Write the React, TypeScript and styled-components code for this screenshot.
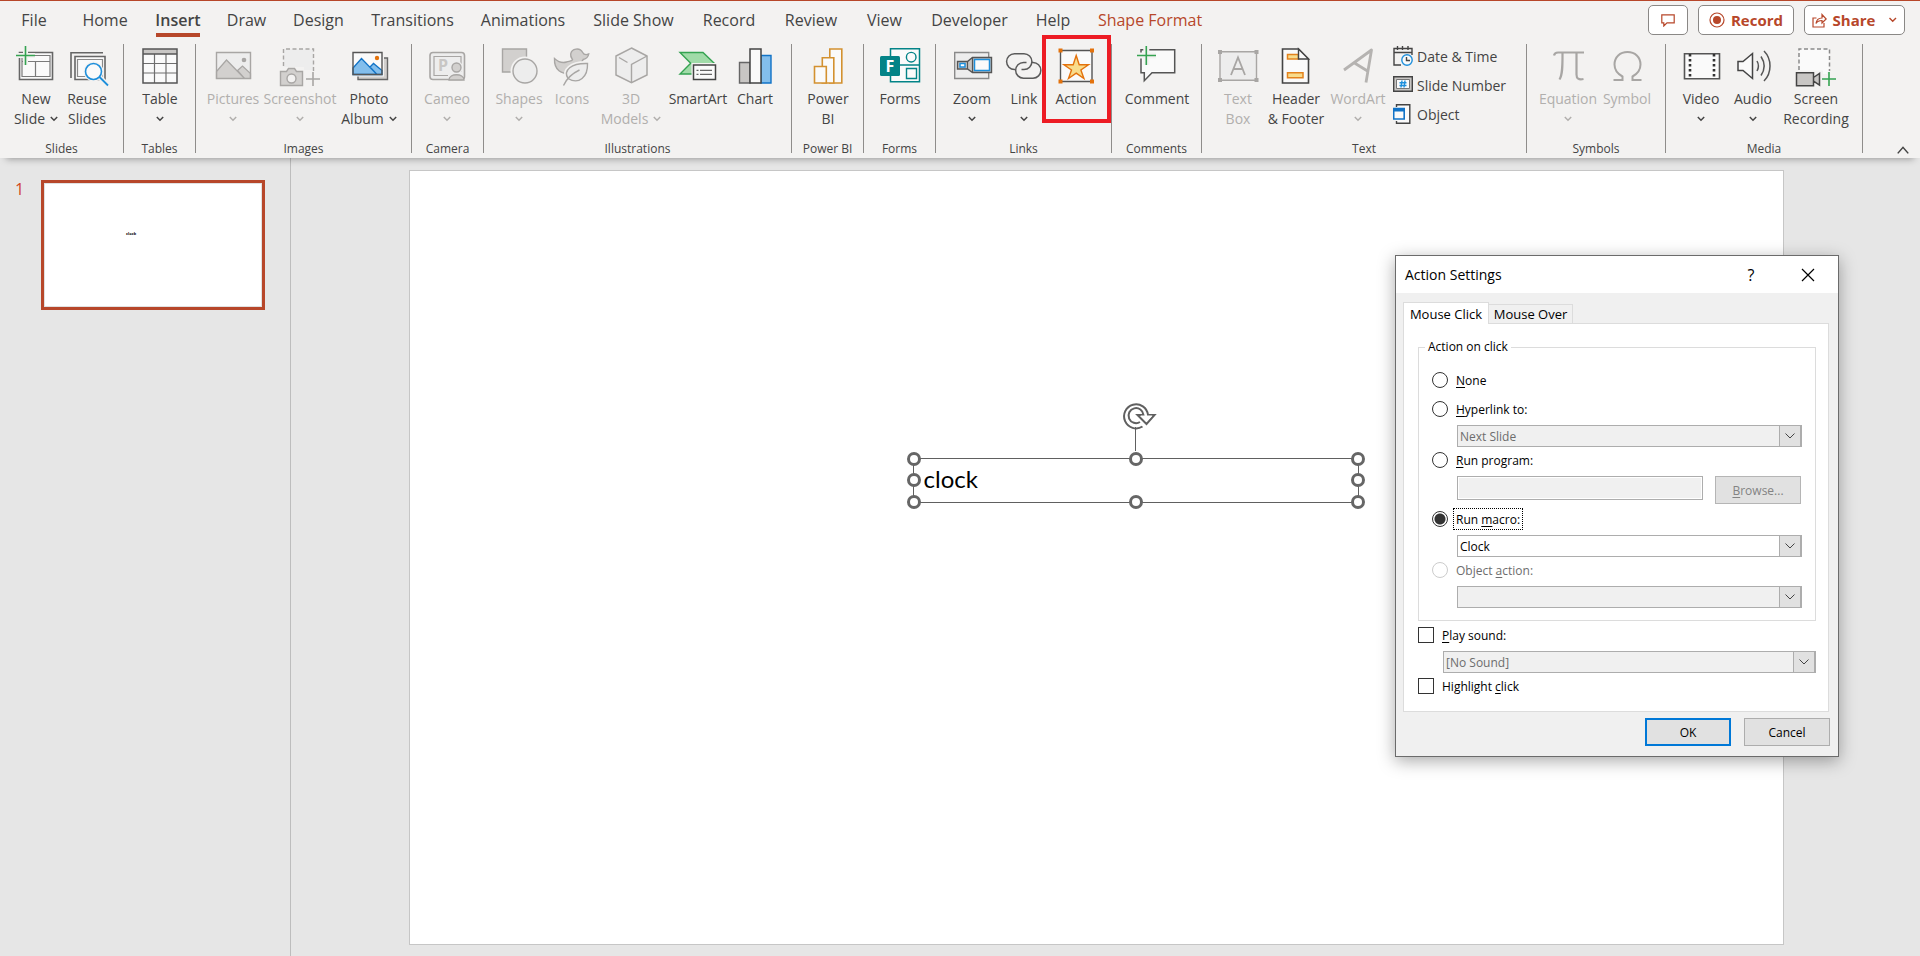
import React from "react";
import styled, { createGlobalStyle, css } from "styled-components";

const accent = "#b7472a";
const ink = "#444444";
const faded = "#b1afad";

const GlobalStyle = createGlobalStyle`
  * { box-sizing: border-box; }
  body {
    margin: 0;
    background: #e6e6e6;
    color: ${ink};
    font-family: "Open Sans", "Noto Sans", sans-serif;
    font-size: 14px;
  }
  button, input, select { font: inherit; color: inherit; }
`;

const Page = styled.div`
  min-height: 100vh;
  display: flex;
  flex-direction: column;
  position: relative;
`;

/* ---------- Tab strip ---------- */

const TopBar = styled.header`
  display: flex;
  align-items: flex-start;
  justify-content: space-between;
  height: 40px;
  padding: 4px 15px 0 21px;
  border-top: 1px solid ${accent};
  background: #f3f2f1;
`;

const TabList = styled.nav`
  display: flex;
  gap: 28px;
`;

const RibbonTab = styled.a<{ $w: number; $active?: boolean; $accent?: boolean }>`
  display: flex;
  flex: none;
  justify-content: center;
  width: ${(p) => p.$w}px;
  height: 32px;
  line-height: 30px;
  font-size: 16px;
  white-space: nowrap;
  text-decoration: none;
  color: ${(p) => (p.$accent ? accent : ink)};
  ${(p) =>
    p.$active &&
    css`
      font-weight: 600;
      border-bottom: 4px solid ${accent};
    `}
  &:first-child { margin-right: 7px; }
`;

const TopActions = styled.div`
  display: flex;
  gap: 10px;
`;

const PillButton = styled.button<{ $w: number }>`
  display: flex;
  align-items: center;
  justify-content: center;
  gap: 6px;
  width: ${(p) => p.$w}px;
  height: 30px;
  padding: 0;
  border: 1px solid #8a8886;
  border-radius: 5px;
  background: #ffffff;
  color: ${accent};
  font-size: 15px;
  font-weight: 700;
`;

/* ---------- Ribbon ---------- */

const Ribbon = styled.section`
  position: relative;
  z-index: 1;
  display: flex;
  height: 118px;
  padding-top: 4px;
  background: #f3f2f1;
  box-shadow: 0 7px 7px -6px rgba(0, 0, 0, 0.35);
`;

const GroupBox = styled.div<{ $w: number }>`
  display: flex;
  flex-direction: column;
  flex: none;
  width: ${(p) => p.$w}px;
  height: 109px;
  border-right: 1px solid #8f8d8b;
`;

const GroupTools = styled.div<{ $start: number }>`
  display: flex;
  flex: none;
  height: 95px;
  padding-left: ${(p) => p.$start}px;
`;

const GroupLabel = styled.div`
  flex: none;
  line-height: 20px;
  font-size: 12px;
  text-align: center;
  white-space: nowrap;
`;

const BigButton = styled.button<{ $w: number }>`
  position: relative;
  display: flex;
  flex-direction: column;
  align-items: center;
  flex: none;
  width: ${(p) => p.$w}px;
  height: 86px;
  padding: 0;
  border: 0;
  background: none;
  line-height: 20px;
  white-space: nowrap;
  &:disabled { color: ${faded}; }
`;

const IconSvg = styled.svg`
  display: block;
  flex: none;
  width: 40px;
  height: 40px;
  margin-bottom: 5px;
  overflow: visible;
`;

const LabelLine = styled.span`
  display: flex;
  align-items: center;
  gap: 5px;
  height: 20px;
`;

const SmallButtons = styled.div`
  display: flex;
  flex-direction: column;
  gap: 5px;
  padding-left: 3px;
`;

const SmallButton = styled.button`
  display: flex;
  align-items: center;
  gap: 4px;
  height: 24px;
  padding: 0;
  border: 0;
  background: none;
  white-space: nowrap;
`;

const Highlight = styled.span`
  position: absolute;
  inset: -9px -9px 7px -8px;
  border: 4px solid #ed1c24;
`;

const CollapseButton = styled.button`
  display: flex;
  align-items: flex-end;
  margin-left: auto;
  padding: 0 11px 4px 0;
  border: 0;
  background: none;
`;

const Chevron = ({ big }: { big?: boolean }) => (
  <svg width={big ? 12 : 8} height={big ? 8 : 6} viewBox="0 0 8 6" preserveAspectRatio="none" fill="none" stroke="currentColor" strokeWidth={big ? 1 : 1.5} aria-hidden>
    {big ? <path d="M0.5 5.5 4 1 7.5 5.5" /> : <path d="M0.8 1 4 4.2 7.2 1" />}
  </svg>
);

/* ---------- Icons, drawn on a 40 by 40 grid ---------- */

const g = "#666666";
const lg = "#a8a6a4";

const icons: Record<string, React.ReactNode> = {
  newSlide: (
    <>
      <path d="M3.5 8.5h33v27h-33z" fill="#fafafa" stroke={g} strokeWidth="1.6" />
      <path d="M6 11.5h28v21H6zM6 17.5h28M19.5 17.5v15" fill="none" stroke="#7a7a7a" strokeWidth="1.2" />
      <path d="M9.5 2v19M0 11.5h19" stroke="#f3f2f1" strokeWidth="5" />
      <path d="M9.5 2v19M0 11.5h19" stroke="#35a352" strokeWidth="1.6" />
    </>
  ),
  reuse: (
    <>
      <path d="M4 34V8.7h32" fill="none" stroke={g} strokeWidth="1.6" />
      <path d="M8 12.5h30v23H8z" fill="#fafafa" stroke={g} strokeWidth="1.6" />
      <path d="M10.5 15.5h25v17h-25z" fill="none" stroke="#8a8a8a" strokeWidth="1.2" />
      <path d="M32.5 33l8.5 8.5" stroke="#f3f2f1" strokeWidth="5" />
      <circle cx="26.5" cy="27.5" r="8" fill="#fafafa" stroke="#f3f2f1" strokeWidth="4" />
      <circle cx="26.5" cy="27.5" r="8" fill="#fafafa" stroke="#1e8fdb" strokeWidth="1.6" />
      <path d="M32.5 33l8.5 8.5" stroke="#1e8fdb" strokeWidth="1.8" />
    </>
  ),
  table: (
    <>
      <path d="M3 5h34v34H3z" fill="#fafafa" />
      <path d="M3 5h34v5H3z" fill="#c8c6c4" />
      <path d="M14.5 10v29M26 10v29M3 19.5h34M3 29h34" stroke="#6e6e6e" strokeWidth="1.2" />
      <path d="M3 5h34v34H3zM3 10h34" fill="none" stroke="#555" strokeWidth="1.5" />
    </>
  ),
  pictures: (
    <>
      <path d="M3.5 8.5h34v26h-34z" fill="#ededed" />
      <path d="M3.5 27.5l10-11.5 18 18.5h-28zM24.5 26.5l5-4.5 8 7.5v5h-6z" fill="#d2d0ce" stroke={lg} strokeWidth="1.2" />
      <circle cx="31" cy="16" r="2.3" fill={lg} />
      <path d="M3.5 8.5h34v26h-34z" fill="none" stroke={lg} strokeWidth="1.4" />
    </>
  ),
  screenshot: (
    <>
      <path d="M3.5 5h30v21h-30z" fill="#ededed" />
      <path d="M3.5 22V5h30v22" fill="none" stroke={lg} strokeWidth="1.4" strokeDasharray="4 2.5" />
      <path d="M-1 23h25v20H-1z" fill="#f3f2f1" />
      <path d="M.5 27.5h6l2-3h6l2 3h6v14H.5z" fill="#d2d0ce" stroke={lg} strokeWidth="1.4" />
      <circle cx="11.5" cy="34.5" r="4.5" fill="#f3f2f1" stroke={lg} strokeWidth="1.4" />
      <path d="M33 28v14M26 35h14" stroke={lg} strokeWidth="1.6" />
    </>
  ),
  album: (
    <>
      <path d="M9 14h29.5v21.5H9z" fill="#d2d0ce" stroke={g} strokeWidth="1.4" />
      <path d="M2 6.5h33v26H2z" fill="#f3f2f1" />
      <path d="M4 8.5h29v22H4z" fill="#fafafa" />
      <path d="M4 24l8.5-9.5L28 30.5H4zM21 23l3.5-3.5 8.5 7v4h-5z" fill="#83beec" stroke="#1173c7" strokeWidth="1.3" />
      <circle cx="28" cy="14" r="2.2" fill="#e3720d" />
      <path d="M4 8.5h29v22H4z" fill="none" stroke="#555" strokeWidth="1.4" />
    </>
  ),
  cameo: (
    <>
      <rect x="3" y="8.5" width="34.5" height="27" rx="3" fill="#ededed" stroke={lg} strokeWidth="1.6" />
      <path d="M21 31.5H7v-19h27v15" fill="none" stroke={lg} strokeWidth="1.2" />
      <text x="11" y="27" fontSize="16" fontWeight="700" fill="#c8c6c4">P</text>
      <circle cx="29.5" cy="23.5" r="6.5" fill="#ededed" />
      <path d="M22 36c0-7 15-7 15 0z" fill="#d2d0ce" stroke={lg} strokeWidth="1.4" />
      <circle cx="29.5" cy="23.5" r="4.5" fill="#d2d0ce" stroke={lg} strokeWidth="1.4" />
    </>
  ),
  shapes: (
    <>
      <path d="M3.5 5h24v23h-24z" fill="#d2d0ce" stroke={lg} strokeWidth="1.4" />
      <circle cx="26" cy="27" r="14.5" fill="#f3f2f1" />
      <circle cx="26" cy="27" r="12" fill="#ededed" stroke={lg} strokeWidth="1.4" />
    </>
  ),
  icons: (
    <>
      <path d="M2.5 14.5c5 4.5 9 4.5 12 3.5 3.5-1 6-1 6-2.5-1-1.5-2.2-3-1.8-5.5 1-5.5 9-7 12-1.5 1 2 3.5 2.5 6 1.5-.5 3-2.5 5-5.5 5.5-1 2-2.5 3-1.7 5 1 6-3.5 9.5-9 9.5C9 30.5 2 26 2.5 14.5z" fill="#d2d0ce" stroke={lg} strokeWidth="1.4" />
      <path d="M16 34.5c-5-8 3-15.5 19.5-15C36 33 27 41 16 34.5z" fill="#ededed" stroke="#f3f2f1" strokeWidth="5" />
      <path d="M16 34.5c-5-8 3-15.5 19.5-15C36 33 27 41 16 34.5z" fill="#ededed" stroke={lg} strokeWidth="1.4" />
      <path d="M11.5 41.5C14 36 19 30 27.5 26" fill="none" stroke={lg} strokeWidth="1.4" />
    </>
  ),
  models: (
    <>
      <path d="M20.5 4 36 12v19l-15.5 7.7L5 31V12z" fill="#ededed" stroke={lg} strokeWidth="1.5" />
      <path d="M20.5 38.5v-18L36 12M8 13.5l8.5 5" fill="none" stroke={lg} strokeWidth="1.4" />
    </>
  ),
  smartArt: (
    <>
      <path d="M2 8.5h23L36.5 19.5 26 30H2l10.7-10.7z" fill="#a0dba8" stroke="#35a352" strokeWidth="1.4" />
      <path d="M13.5 19h26v19h-26z" fill="#f3f2f1" />
      <path d="M15.5 21h22v14.5h-22z" fill="#fafafa" stroke="#444" strokeWidth="1.5" />
      <path d="M18.5 26.3h2M22 26.3h12M18.5 30.3h2M22 30.3h12" stroke="#666" strokeWidth="1.2" />
    </>
  ),
  chart: (
    <>
      <path d="M4.5 18.5H15V39H4.5z" fill="#c8c6c4" stroke={g} strokeWidth="1.4" />
      <path d="M26 11.5h10V39H26z" fill="#83beec" stroke="#1173c7" strokeWidth="1.4" />
      <path d="M15 5h11v34H15z" fill="#fafafa" stroke="#444" strokeWidth="1.5" />
    </>
  ),
  powerBi: (
    <g fill="#fafafa" stroke="#d39130" strokeWidth="1.6">
      <path d="M21.8 5h12v34h-12z" />
      <path d="M14.3 13.7h11.5V39H14.3z" />
      <path d="M6.5 22.5h11.8V39H6.5z" />
    </g>
  ),
  forms: (
    <>
      <path d="M10.5 4.7h29v33h-29zM10.5 21h29" fill="#fafafa" stroke="#038387" strokeWidth="1.5" />
      <circle cx="31.2" cy="13.2" r="4.8" fill="none" stroke="#038387" strokeWidth="1.4" />
      <path d="M26.5 24.5h10V34.5h-10z" fill="none" stroke="#038387" strokeWidth="1.4" />
      <rect x="0" y="12" width="20" height="20" rx="1.5" fill="#038387" />
      <text x="5.5" y="27.5" fontSize="16" fontWeight="700" fill="#fff">F</text>
    </>
  ),
  zoom: (
    <>
      <path d="M2.7 8.5h34v26h-34z" fill="#ededed" stroke="#8a8a8a" strokeWidth="1.4" />
      <path d="M5.5 17.5h10l5-4h19v15h-19l-5-3.5h-10z" fill="#c8c6c4" stroke="#555" strokeWidth="1.4" />
      <path d="M8 19.5h5v3.5H8z" fill="#fff" stroke="#1e8fdb" strokeWidth="1.5" />
      <path d="M22.5 15.5h15v11h-15z" fill="#fafafa" stroke="#1e8fdb" strokeWidth="1.5" />
      <path d="M15.5 17.5V25M20.5 13.5v15" stroke="#555" strokeWidth="1.2" />
    </>
  ),
  link: (
    <g fill="none" stroke="#5a5a5a" strokeWidth="1.5">
      <path d="M11.5 25.5h-1a7.8 7.8 0 0 1 0-15.8h9.5a7.8 7.8 0 0 1 0 15.8h-2.5" />
      <path d="M22.5 18.5h-3a7.8 7.8 0 0 0 0 15.7h9.5a7.8 7.8 0 0 0 0-15.7h-1.5" />
    </g>
  ),
  action: (
    <>
      <path d="M4.5 6.5h31.5v31H4.5z" fill="#fafafa" stroke="#555" strokeWidth="1.4" />
      <path d="M20.2 11.5l3 9.2h9.3l-7.6 5.3 3 8.5-7.7-5.3-7.7 5.3 3-8.5-7.6-5.3h9.3z" fill="#f8dc8c" stroke="#e3720d" strokeWidth="1.4" />
      <path d="M2.5 4.5h4v4h-4zM34 4.5h4v4h-4zM2.5 35.5h4v4h-4zM34 35.5h4v4h-4z" fill="#e3720d" />
    </>
  ),
  comment: (
    <>
      <path d="M4 5.7h33.7v23H15L7.3 36.7v-8H4z" fill="#fafafa" stroke="#555" strokeWidth="1.5" />
      <path d="M9.3 2v19M0 11.5h19" stroke="#f3f2f1" strokeWidth="6" />
      <path d="M9.3 2v19M0 11.5h19" stroke="#35a352" strokeWidth="1.6" />
    </>
  ),
  textBox: (
    <>
      <path d="M2 7.7h36.5v28.6H2z" fill="#ededed" stroke={lg} strokeWidth="1.4" />
      <path d="M0 6h4v4H0zM36.5 6h4v4h-4zM0 34h4v4H0zM36.5 34h4v4h-4z" fill={lg} />
      <path d="M13 31l7-17.5L27 31M15.5 25h9.3" fill="none" stroke={lg} strokeWidth="1.8" />
    </>
  ),
  header: (
    <>
      <path d="M6.5 5h16L32.5 15v24h-26z" fill="#fafafa" stroke="#444" strokeWidth="1.6" />
      <path d="M11.5 10.5h11v4.5h-11zM11.5 28.7h15.5v5h-15.5z" fill="#f8dc8c" stroke="#e3821d" strokeWidth="1.5" />
      <path d="M22.5 5v10h10z" fill="#fafafa" stroke="#444" strokeWidth="1.4" />
    </>
  ),
  wordArt: <path d="M6 26 33.5 6 28 38.5M16.5 19 29.5 27" fill="none" stroke="#b5b3b1" strokeWidth="2.8" strokeLinejoin="round" />,
  equation: <path d="M6 11.5c.5-2.5 2-3 4-3h26M14.5 8.5c0 12 .3 22-3 27M28.5 8.5v22c0 4 2 5.5 7 4.5" fill="none" stroke={lg} strokeWidth="2.2" />,
  symbol: <path d="M6.5 36h9v-3.5C10 29.5 7.5 25.5 7.5 20.5 7.5 13 13 8 20.5 8s13 5 13 12.5c0 5-2.5 9-8 12V36h9" fill="none" stroke={lg} strokeWidth="2" />,
  video: (
    <>
      <path d="M3.5 9.7h35v25h-35z" fill="#fafafa" stroke="#555" strokeWidth="1.6" />
      <path d="M9 10v24.5M33 10v24.5" stroke="#333" strokeWidth="2.6" strokeDasharray="2.5 2.5" />
    </>
  ),
  audio: (
    <>
      <path d="M5 17.5h5l9.5-8v25l-9.5-8H5z" fill="#fafafa" stroke="#444" strokeWidth="1.5" />
      <path d="M24 17c2 3.5 2 6.5 0 10M28 12.5c4 6 4 13 0 19M31 7c8 8 8 22 0 30" fill="none" stroke="#555" strokeWidth="1.5" />
    </>
  ),
  screenRec: (
    <>
      <path d="M3 5h30.5v25H3z" fill="#fafafa" />
      <path d="M3 26V5h30.5v22" fill="none" stroke="#8a8a8a" strokeWidth="1.5" strokeDasharray="4 2.5" />
      <path d="M-1 26.5h28v17H-1z" fill="#f3f2f1" />
      <path d="M.5 28.7h17v13H.5zM17.5 33.5l6-4v11.5l-6-4z" fill="#c8c6c4" stroke="#444" strokeWidth="1.5" />
      <path d="M33 28v14M26 35h14" stroke="#f3f2f1" strokeWidth="4" />
      <path d="M33 28v14M26 35h14" stroke="#35a352" strokeWidth="1.6" />
    </>
  ),
};

type ToolProps = {
  icon: string;
  w: number;
  lines: string[];
  menu?: boolean;
  disabled?: boolean;
  children?: React.ReactNode;
};

const Tool = ({ icon, w, lines, menu, disabled, children }: ToolProps) => (
  <BigButton $w={w} disabled={disabled}>
    <IconSvg viewBox="0 0 40 40" aria-hidden>{icons[icon]}</IconSvg>
    <LabelLine>{lines[0]}</LabelLine>
    {(lines[1] || menu) && (
      <LabelLine>
        {lines[1]}
        {menu && <Chevron />}
      </LabelLine>
    )}
    {children}
  </BigButton>
);

const Group = ({ w, start, label, children }: { w: number; start: number; label: string; children: React.ReactNode }) => (
  <GroupBox $w={w}>
    <GroupTools $start={start}>{children}</GroupTools>
    <GroupLabel>{label}</GroupLabel>
  </GroupBox>
);

/* ---------- Work area ---------- */

const Workspace = styled.main`
  flex: 1;
  display: flex;
`;

const SlidePanel = styled.aside`
  display: flex;
  align-items: flex-start;
  gap: 20px;
  flex: none;
  width: 291px;
  padding: 22px 0 0 15px;
  border-right: 1px solid #bdbdbd;
`;

const SlideNumber = styled.span`
  width: 6px;
  font-size: 16px;
  line-height: 18px;
  color: #d24726;
`;

const Thumbnail = styled.button`
  width: 224px;
  height: 130px;
  padding: 0 0 22px 82px;
  border: 3px solid ${accent};
  background: #ffffff;
  box-shadow: inset 0 0 0 1px #e1e1e1;
  text-align: left;
  font-size: 4px;
  line-height: 6px;
  font-weight: 700;
  color: #000000;
`;

const Stage = styled.div`
  flex: 1;
  padding: 12px 136px 11px 118px;
`;

const Slide = styled.div`
  position: relative;
  aspect-ratio: 1375 / 775;
  border: 1px solid #c6c6c6;
  background: #ffffff;
`;

const TextShape = styled.div`
  position: absolute;
  left: 36.6%;
  top: 37.1%;
  width: 446px;
  height: 45px;
  padding-left: 10px;
  border: 1px solid #606060;
  font-family: Lato, sans-serif;
  font-size: 24px;
  line-height: 40px;
  color: #000000;
`;

const Handle = styled.span<{ $x: string; $y: string }>`
  position: absolute;
  left: ${(p) => p.$x};
  top: ${(p) => p.$y};
  width: 14px;
  height: 14px;
  margin: -7px 0 0 -7px;
  border: 3px solid #666666;
  border-radius: 50%;
  background: #ffffff;
`;

const RotateHandle = styled.svg`
  position: absolute;
  left: 50%;
  top: -58px;
  width: 36px;
  height: 50px;
  margin-left: -15px;
`;

/* ---------- Dialog ---------- */

const Dialog = styled.section`
  position: absolute;
  z-index: 2;
  top: 255px;
  right: 81px;
  width: 444px;
  border: 1px solid #6b6b6b;
  background: #f0f0f0;
  box-shadow: 0 4px 16px rgba(0, 0, 0, 0.34);
  color: #000000;
  font-size: 12px;
`;

const DialogTitle = styled.div`
  display: flex;
  align-items: center;
  height: 37px;
  padding: 0 23px 0 9px;
  background: #ffffff;
`;

const TitleText = styled.h1`
  flex: 1;
  margin: 0;
  font-size: 14px;
  font-weight: 400;
`;

const TitleButton = styled.button`
  display: flex;
  justify-content: center;
  align-items: center;
  width: 14px;
  height: 24px;
  margin-left: 43px;
  padding: 0;
  border: 0;
  background: none;
  font-size: 16px;
`;

const DialogTabs = styled.div`
  display: flex;
  align-items: flex-end;
  height: 30px;
  padding: 0 7px;
`;

const DialogTab = styled.button<{ $w: number; $active?: boolean }>`
  position: relative;
  z-index: ${(p) => (p.$active ? 1 : 0)};
  width: ${(p) => p.$w}px;
  height: ${(p) => (p.$active ? 22 : 19)}px;
  margin-bottom: ${(p) => (p.$active ? -1 : 0)}px;
  padding: 0;
  border: 1px solid #dcdcdc;
  border-left-width: ${(p) => (p.$active ? 1 : 0)}px;
  border-bottom: 0;
  background: ${(p) => (p.$active ? "#ffffff" : "#f0f0f0")};
  font-size: 13px;
  line-height: 18px;
  white-space: nowrap;
`;

const TabPanel = styled.div`
  margin: 0 9px 0 7px;
  padding: 15px 12px 15px 14px;
  border: 1px solid #dcdcdc;
  background: #ffffff;
`;

const Fieldset = styled.fieldset`
  margin: 0 0 4px;
  padding: 15px 13px 9px;
  border: 1px solid #dcdcdc;
  min-width: 0;
`;

const Legend = styled.legend`
  margin-left: -7px;
  padding: 0 3px;
  line-height: 16px;
`;

const Choice = styled.div<{ $after?: number; $muted?: boolean }>`
  display: flex;
  align-items: center;
  gap: 6px;
  height: 20px;
  margin-bottom: ${(p) => p.$after ?? 6}px;
  color: ${(p) => (p.$muted ? "#6d6d6d" : "#000000")};
`;

const ChoiceLabel = styled.label<{ $focus?: boolean }>`
  padding: 1px 2px 0;
  line-height: 19px;
  outline: ${(p) => (p.$focus ? "1px dotted #000000" : "none")};
  u { text-underline-offset: 2px; }
`;

const Radio = styled.input.attrs({ type: "radio" })`
  appearance: none;
  width: 16px;
  height: 16px;
  margin: 0;
  border: 1px solid #333333;
  border-radius: 50%;
  background: #ffffff;
  &:checked { background: radial-gradient(circle, #333333 5px, #ffffff 6px); }
  &:disabled { border-color: #cccccc; }
`;

const Check = styled.input.attrs({ type: "checkbox" })`
  appearance: none;
  width: 16px;
  height: 16px;
  margin: 0;
  border: 1px solid #333333;
  background: #ffffff;
`;

const ComboBox = styled.div<{ $indent: number }>`
  position: relative;
  height: 22px;
  margin: 0 0 3px ${(p) => p.$indent}px;
`;

const Select = styled.select`
  appearance: none;
  display: block;
  width: 100%;
  height: 22px;
  padding: 0 24px 0 2px;
  border: 1px solid #adadad;
  border-radius: 0;
  background: #ffffff;
  opacity: 1;
  &:disabled { background: #f0f0f0; color: #6d6d6d; }
`;

const Arrow = styled.span`
  position: absolute;
  top: 0;
  right: 0;
  display: flex;
  align-items: center;
  justify-content: center;
  width: 23px;
  height: 22px;
  border: 1px solid #adadad;
  border-right-width: 2px;
  background: #e1e1e1;
  color: #444444;
  pointer-events: none;
`;

const ProgramRow = styled.div`
  display: flex;
  gap: 12px;
  margin: 0 1px 5px 25px;
`;

const ProgramInput = styled.input`
  flex: 1;
  min-width: 0;
  height: 24px;
  padding: 0 2px;
  border: 1px solid #adadad;
  background: #f0f0f0;
  box-shadow: inset 0 0 0 1px #ffffff;
`;

const PushButton = styled.button<{ $primary?: boolean }>`
  width: 86px;
  height: 28px;
  padding: 0;
  border: ${(p) => (p.$primary ? "2px solid #0078d7" : "1px solid #adadad")};
  background: #e1e1e1;
  &:disabled { color: #838383; border-color: #b5b5b5; }
  u { text-underline-offset: 2px; }
`;

const DialogFooter = styled.div`
  display: flex;
  justify-content: flex-end;
  gap: 13px;
  padding: 6px 8px 10px;
`;

const Combo = ({ id, label, value, indent, disabled }: { id: string; label: string; value: string; indent: number; disabled?: boolean }) => (
  <ComboBox $indent={indent}>
    <Select id={id} aria-label={label} disabled={disabled}>
      <option>{value}</option>
    </Select>
    <Arrow>
      <svg width="12" height="8" viewBox="0 0 12 8" fill="none" stroke="currentColor" aria-hidden>
        <path d="M1.5 1.5 6 6 10.5 1.5" />
      </svg>
    </Arrow>
  </ComboBox>
);

const tabs: { name: string; w: number; active?: boolean; accent?: boolean }[] = [
  { name: "File", w: 26 },
  { name: "Home", w: 46 },
  { name: "Insert", w: 44, active: true },
  { name: "Draw", w: 37 },
  { name: "Design", w: 51 },
  { name: "Transitions", w: 81 },
  { name: "Animations", w: 84 },
  { name: "Slide Show", w: 81 },
  { name: "Record", w: 54 },
  { name: "Review", w: 54 },
  { name: "View", w: 37 },
  { name: "Developer", w: 77 },
  { name: "Help", w: 34 },
  { name: "Shape Format", w: 104, accent: true },
];

const handles: [string, string][] = [
  ["0%", "0%"], ["50%", "0%"], ["100%", "0%"],
  ["0%", "50%"], ["100%", "50%"],
  ["0%", "100%"], ["50%", "100%"], ["100%", "100%"],
];

export default function App() {
  return (
    <Page>
      <GlobalStyle />
      <TopBar>
        <TabList>
          {tabs.map((t) => (
            <RibbonTab key={t.name} href="#" $w={t.w} $active={t.active} $accent={t.accent}>{t.name}</RibbonTab>
          ))}
        </TabList>
        <TopActions>
          <PillButton $w={40} aria-label="Comments">
            <svg width="14" height="13" viewBox="0 0 14 13" fill="none" stroke={accent} strokeWidth="1.2" aria-hidden>
              <path d="M.8.8h12.4v8H6L2.8 12V8.8h-2z" />
            </svg>
          </PillButton>
          <PillButton $w={96}>
            <svg width="16" height="16" viewBox="0 0 16 16" aria-hidden>
              <circle cx="8" cy="8" r="7" fill="none" stroke={accent} strokeWidth="1.2" />
              <circle cx="8" cy="8" r="4" fill={accent} />
            </svg>
            Record
          </PillButton>
          <PillButton $w={101}>
            <svg width="15" height="15" viewBox="0 0 15 15" fill="none" stroke={accent} strokeWidth="1.2" aria-hidden>
              <path d="M4.5 5H1v9h11v-4" />
              <path d="M4 10.5C4.5 6.5 7 5 10 5V1.5L14.2 6 10 10V7.5C7.5 7.5 5.5 8 4 10.5z" />
            </svg>
            Share
            <svg width="16" height="6" viewBox="0 0 16 6" fill="none" stroke={accent} strokeWidth="1.4" aria-hidden>
              <path d="M8.5 1 11.7 4.2 15 1" />
            </svg>
          </PillButton>
        </TopActions>
      </TopBar>

      <Ribbon>
        <Group w={124} start={10} label="Slides">
          <Tool icon="newSlide" w={52} lines={["New", "Slide"]} menu />
          <Tool icon="reuse" w={50} lines={["Reuse", "Slides"]} />
        </Group>
        <Group w={72} start={10} label="Tables">
          <Tool icon="table" w={52} lines={["Table"]} menu />
        </Group>
        <Group w={216} start={4} label="Images">
          <Tool icon="pictures" w={66} lines={["Pictures"]} menu disabled />
          <Tool icon="screenshot" w={68} lines={["Screenshot"]} menu disabled />
          <Tool icon="album" w={70} lines={["Photo", "Album"]} menu />
        </Group>
        <Group w={72} start={9} label="Camera">
          <Tool icon="cameo" w={52} lines={["Cameo"]} menu disabled />
        </Group>
        <Group w={308} start={7} label="Illustrations">
          <Tool icon="shapes" w={56} lines={["Shapes"]} menu disabled />
          <Tool icon="icons" w={50} lines={["Icons"]} disabled />
          <Tool icon="models" w={68} lines={["3D", "Models"]} menu disabled />
          <Tool icon="smartArt" w={66} lines={["SmartArt"]} />
          <Tool icon="chart" w={48} lines={["Chart"]} />
        </Group>
        <Group w={72} start={10} label="Power BI">
          <Tool icon="powerBi" w={52} lines={["Power", "BI"]} />
        </Group>
        <Group w={72} start={10} label="Forms">
          <Tool icon="forms" w={52} lines={["Forms"]} />
        </Group>
        <Group w={176} start={10} label="Links">
          <Tool icon="zoom" w={52} lines={["Zoom"]} menu />
          <Tool icon="link" w={52} lines={["Link"]} menu />
          <Tool icon="action" w={52} lines={["Action"]}>
            <Highlight />
          </Tool>
        </Group>
        <Group w={90} start={10} label="Comments">
          <Tool icon="comment" w={70} lines={["Comment"]} />
        </Group>
        <Group w={325} start={8} label="Text">
          <Tool icon="textBox" w={56} lines={["Text", "Box"]} disabled />
          <Tool icon="header" w={60} lines={["Header", "& Footer"]} />
          <Tool icon="wordArt" w={64} lines={["WordArt"]} menu disabled />
          <SmallButtons>
            <SmallButton>
              <svg width="20" height="20" viewBox="0 0 20 20" fill="none" stroke="#444" strokeWidth="1.4" aria-hidden>
                <path d="M8 19H1V2.5h18V9M1 6.5h18M4.5 0v4M9.5 0v4M15 0v4" />
                <circle cx="14" cy="14" r="5.2" fill="#fafafa" stroke="#1e8fdb" />
                <path d="M13.5 11v3.5H17" />
              </svg>
              Date &amp; Time
            </SmallButton>
            <SmallButton>
              <svg width="20" height="20" viewBox="0 0 20 20" fill="#c8c6c4" stroke="#444" strokeWidth="1.4" aria-hidden>
                <path d="M.7 1.7h18.600v14.6H.7z" />
                <path d="M3.5 4.5h13v9h-13z" fill="#fafafa" stroke="#777" strokeWidth="1" />
                <path d="M9 5.5l-1 7M12 5.5l-1 7M6.5 7.7h7M6.5 10.5h7" stroke="#1e8fdb" />
              </svg>
              Slide Number
            </SmallButton>
            <SmallButton>
              <svg width="20" height="20" viewBox="0 0 20 20" fill="none" stroke="#444" strokeWidth="1.4" aria-hidden>
                <path d="M3.5 3V.7h13.3v18.6H3.5V17" fill="#fafafa" />
                <path d="M.7 4.5h10.5v10.5H.7z" fill="#fafafa" stroke="#1173c7" strokeWidth="1.6" />
                <path d="M.7 6h10.5" stroke="#1173c7" strokeWidth="3" />
              </svg>
              Object
            </SmallButton>
          </SmallButtons>
        </Group>
        <Group w={139} start={11} label="Symbols">
          <Tool icon="equation" w={60} lines={["Equation"]} menu disabled />
          <Tool icon="symbol" w={58} lines={["Symbol"]} disabled />
        </Group>
        <Group w={197} start={9} label="Media">
          <Tool icon="video" w={52} lines={["Video"]} menu />
          <Tool icon="audio" w={52} lines={["Audio"]} menu />
          <Tool icon="screenRec" w={74} lines={["Screen", "Recording"]} />
        </Group>
        <CollapseButton aria-label="Collapse ribbon">
          <Chevron big />
        </CollapseButton>
      </Ribbon>

      <Workspace>
        <SlidePanel>
          <SlideNumber>1</SlideNumber>
          <Thumbnail>clock</Thumbnail>
        </SlidePanel>
        <Stage>
          <Slide>
            <TextShape>
              clock
              <RotateHandle viewBox="0 0 36 50" fill="none" stroke="#606060" strokeWidth="2" aria-hidden>
                <path d="M14.5 26v24" strokeWidth="1" />
                <path d="M21.5 25.5A12 12 0 1 1 27 14h6.5L25.5 23 16.5 14h6A7.5 7.5 0 1 0 19 21" />
                <path d="M19.5 14.5h12l-6 6.5z" fill="#fff" stroke="none" />
              </RotateHandle>
              {handles.map(([x, y]) => (
                <Handle key={x + y} $x={x} $y={y} />
              ))}
            </TextShape>
          </Slide>
        </Stage>
      </Workspace>

      <Dialog role="dialog" aria-label="Action Settings">
        <DialogTitle>
          <TitleText>Action Settings</TitleText>
          <TitleButton aria-label="Help">?</TitleButton>
          <TitleButton aria-label="Close">
            <svg width="14" height="14" viewBox="0 0 14 14" stroke="#000" strokeWidth="1.2" aria-hidden>
              <path d="M1 1l12 12M13 1 1 13" />
            </svg>
          </TitleButton>
        </DialogTitle>
        <DialogTabs role="tablist">
          <DialogTab role="tab" $w={86} $active>Mouse Click</DialogTab>
          <DialogTab role="tab" $w={84}>Mouse Over</DialogTab>
        </DialogTabs>
        <TabPanel>
          <Fieldset>
            <Legend>Action on click</Legend>
            <Choice $after={9}>
              <Radio id="none" name="action" />
              <ChoiceLabel htmlFor="none"><u>N</u>one</ChoiceLabel>
            </Choice>
            <Choice>
              <Radio id="link" name="action" />
              <ChoiceLabel htmlFor="link"><u>H</u>yperlink to:</ChoiceLabel>
            </Choice>
            <Combo id="link-target" label="Hyperlink target" value="Next Slide" indent={25} disabled />
            <Choice>
              <Radio id="program" name="action" />
              <ChoiceLabel htmlFor="program"><u>R</u>un program:</ChoiceLabel>
            </Choice>
            <ProgramRow>
              <ProgramInput type="text" aria-label="Program path" disabled />
              <PushButton disabled><u>B</u>rowse...</PushButton>
            </ProgramRow>
            <Choice>
              <Radio id="macro" name="action" defaultChecked />
              <ChoiceLabel htmlFor="macro" $focus>Run <u>m</u>acro:</ChoiceLabel>
            </Choice>
            <Combo id="macro-name" label="Macro" value="Clock" indent={25} />
            <Choice $muted>
              <Radio id="object" name="action" disabled />
              <ChoiceLabel htmlFor="object">Object <u>a</u>ction:</ChoiceLabel>
            </Choice>
            <Combo id="object-action" label="Object action" value="" indent={25} disabled />
          </Fieldset>
          <Choice>
            <Check id="sound" />
            <ChoiceLabel htmlFor="sound"><u>P</u>lay sound:</ChoiceLabel>
          </Choice>
          <Combo id="sound-name" label="Sound" value="[No Sound]" indent={25} disabled />
          <Choice $after={0}>
            <Check id="highlight" />
            <ChoiceLabel htmlFor="highlight">Highlight <u>c</u>lick</ChoiceLabel>
          </Choice>
        </TabPanel>
        <DialogFooter>
          <PushButton $primary>OK</PushButton>
          <PushButton>Cancel</PushButton>
        </DialogFooter>
      </Dialog>
    </Page>
  );
}
